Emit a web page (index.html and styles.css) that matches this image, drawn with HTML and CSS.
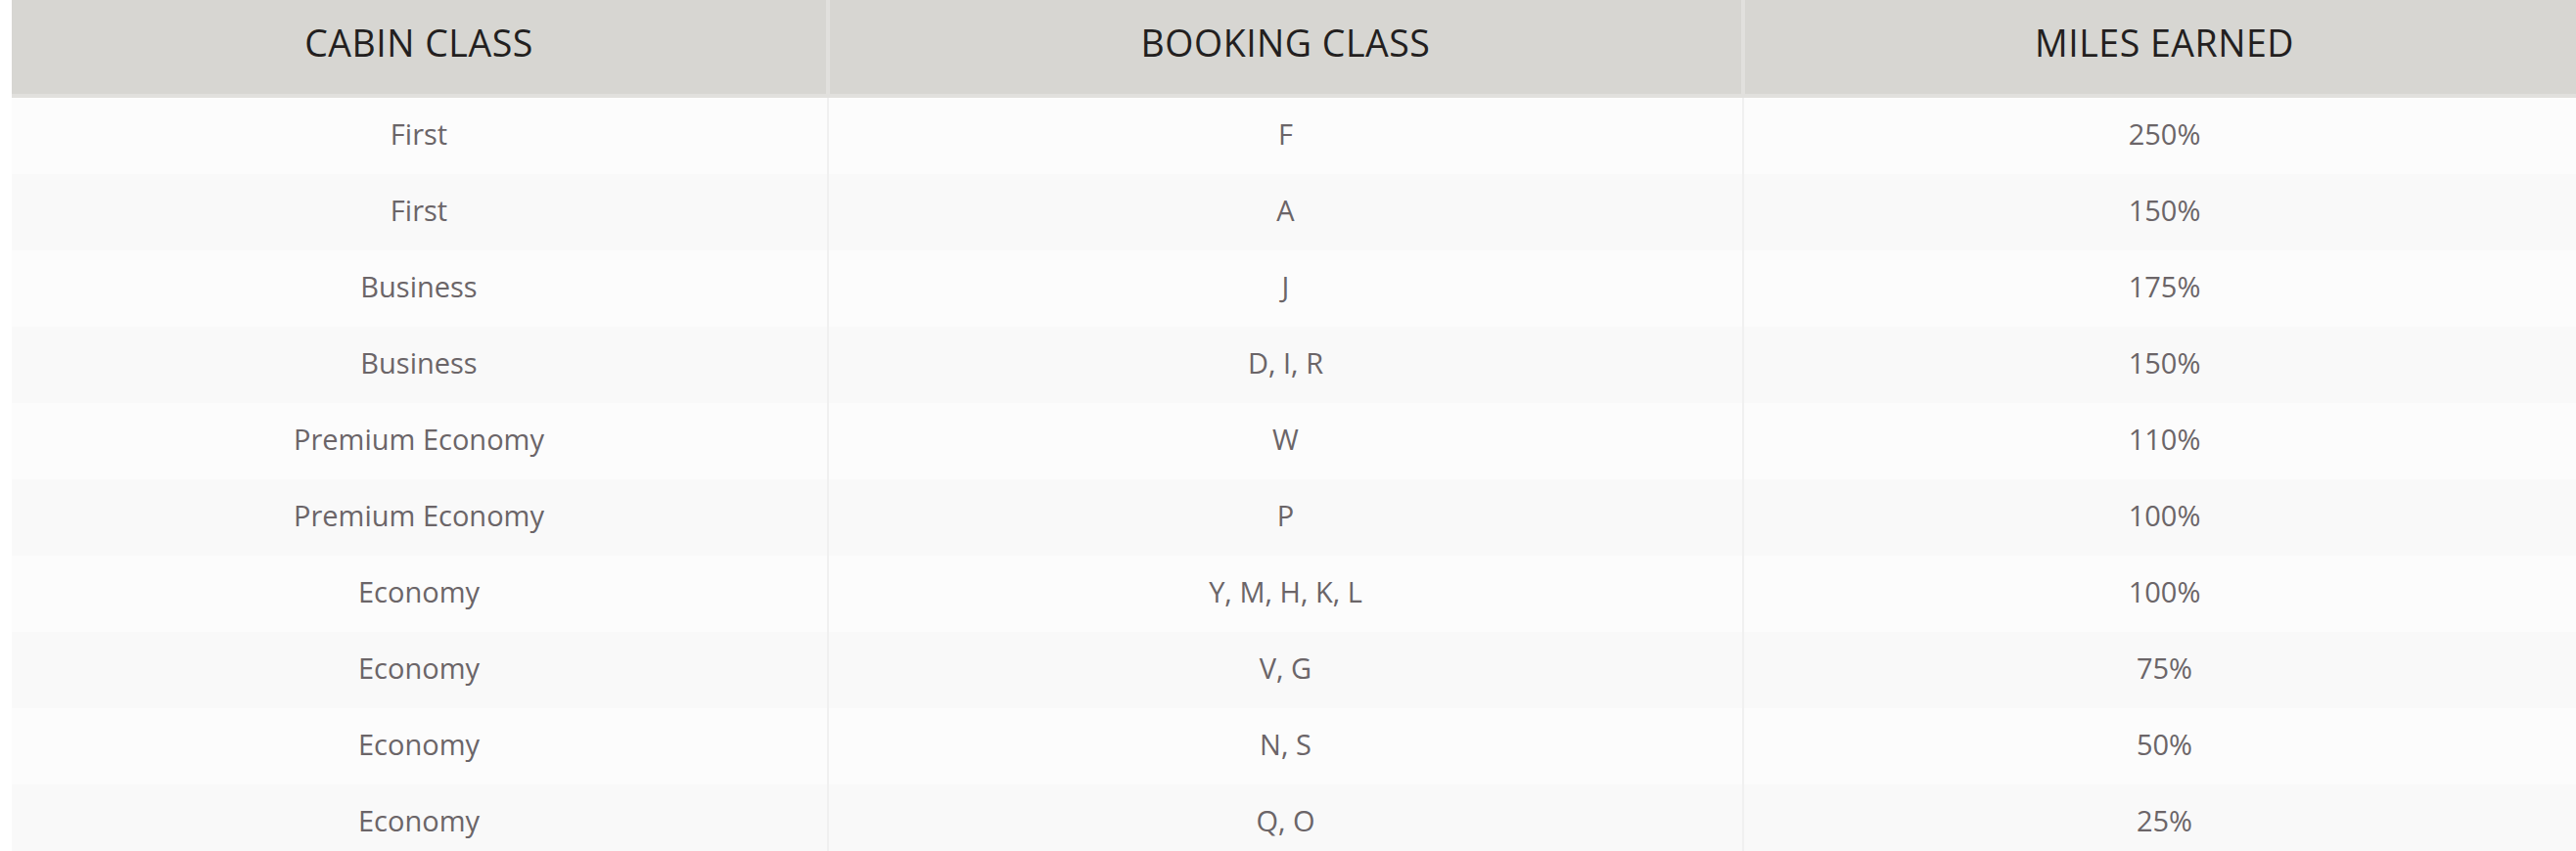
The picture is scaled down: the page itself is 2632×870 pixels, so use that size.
FILE: index.html
```html
<!DOCTYPE html>
<html lang="en">
<head>
<meta charset="utf-8">
<title>Miles earned by booking class</title>
<link rel="stylesheet" href="styles.css">
</head>
<body>
<table class="earn-table">
  <colgroup>
    <col class="c1">
    <col class="c2">
    <col class="c3">
  </colgroup>
  <thead>
    <tr>
      <th>CABIN CLASS</th>
      <th>BOOKING CLASS</th>
      <th>MILES EARNED</th>
    </tr>
  </thead>
  <tbody>
    <tr><td>First</td><td>F</td><td>250%</td></tr>
    <tr><td>First</td><td>A</td><td>150%</td></tr>
    <tr><td>Business</td><td>J</td><td>175%</td></tr>
    <tr><td>Business</td><td>D, I, R</td><td>150%</td></tr>
    <tr><td>Premium Economy</td><td>W</td><td>110%</td></tr>
    <tr><td>Premium Economy</td><td>P</td><td>100%</td></tr>
    <tr><td>Economy</td><td>Y, M, H, K, L</td><td>100%</td></tr>
    <tr><td>Economy</td><td>V, G</td><td>75%</td></tr>
    <tr><td>Economy</td><td>N, S</td><td>50%</td></tr>
    <tr><td>Economy</td><td>Q, O</td><td>25%</td></tr>
  </tbody>
</table>
</body>
</html>
```
FILE: styles.css
```css
html, body {
  margin: 0;
  padding: 0;
  overflow: hidden;
  background: #ffffff;
}

body {
  padding-left: 12px;
  font-family: "Open Sans", "Noto Sans", sans-serif;
}

.earn-table {
  table-layout: fixed;
  width: 2628px;
  border-collapse: separate;
  border-spacing: 0;
}

.earn-table .c1 { width: 832px; }
.earn-table .c2 { width: 935px; }
.earn-table .c3 { width: 861px; }

.earn-table th {
  box-sizing: border-box;
  height: 100px;
  padding: 0 0 9px;
  background: #d7d6d2;
  border-bottom: 4px solid #e1e0dd;
  color: #231f20;
  font-weight: 400;
  font-size: 37.5px;
  letter-spacing: 0.5px;
  text-align: center;
  vertical-align: middle;
}

.earn-table th + th {
  border-left: 4px solid #e1e0dd;
}

.earn-table td {
  box-sizing: border-box;
  height: 78px;
  padding: 0 0 6px;
  color: #6b6568;
  font-size: 29px;
  text-align: center;
  vertical-align: middle;
  background-color: #fcfcfc;
}

.earn-table tbody tr:nth-child(even) td {
  background-color: #f9f9f9;
}

.earn-table td + td {
  border-left: 4px solid transparent;
  background-image: linear-gradient(to right, transparent 1px, #f0f0f0 1px, #f0f0f0 3px, transparent 3px);
  background-origin: border-box;
  background-size: 4px 100%;
  background-repeat: no-repeat;
}
```
